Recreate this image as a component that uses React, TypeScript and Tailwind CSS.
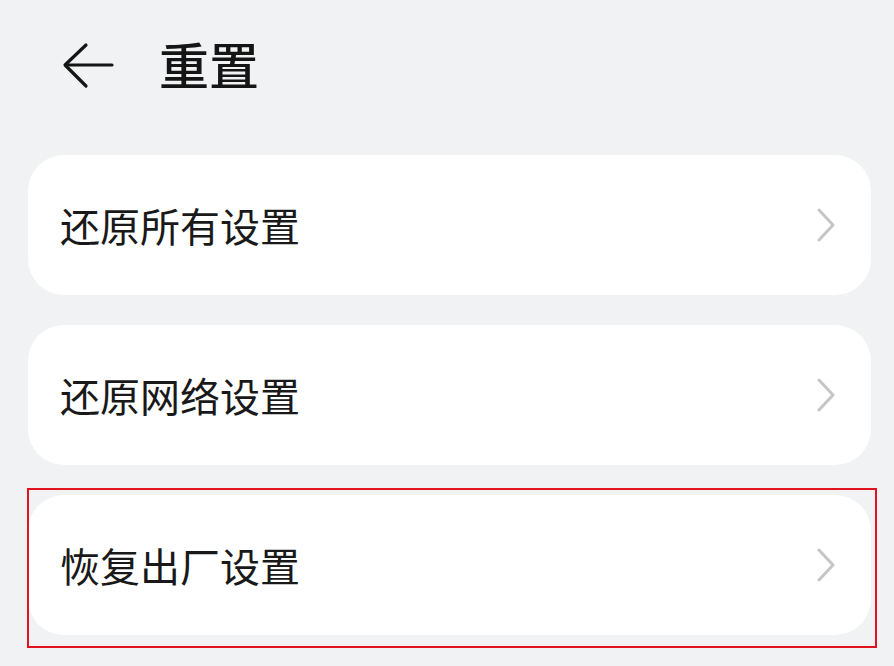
import React from 'react';

const items = ['还原所有设置', '还原网络设置', '恢复出厂设置'];

// Back arrow drawn to match the thin stroke in the header
const BackArrow = () => (
  <svg width="54" height="48" viewBox="0 0 54 48" fill="none" className="text-[#151515]">
    <path d="M51 23H5" stroke="currentColor" strokeWidth="3.2" strokeLinecap="round" />
    <path d="M25 3L4 23L25 44" stroke="currentColor" strokeWidth="3.2" strokeLinecap="round" strokeLinejoin="round" />
  </svg>
);

const Chevron = () => (
  <svg width="19" height="34" viewBox="0 0 19 34" fill="none">
    <path d="M2 2L16 17L2 32" stroke="#c6c6c8" strokeWidth="3" strokeLinecap="round" strokeLinejoin="round" />
  </svg>
);

const SettingRow = ({ label, highlighted }: { label: string; highlighted?: boolean }) => (
  <div className="relative h-[140px] w-[843px] rounded-[36px] bg-white flex items-center justify-between pl-[32px] pr-[35px]">
    <span className="text-[40px] leading-none text-[#191919]">{label}</span>
    <Chevron />
    {highlighted && (
      <div className="absolute -left-[1px] -top-[7px] -right-[6px] -bottom-[13px] border-2 border-[#e3141f] pointer-events-none" />
    )}
  </div>
);

export default function App() {
  return (
    <div
      className="w-[894px] h-[666px] overflow-hidden bg-[#f1f2f4]"
      style={{ fontFamily: '"Noto Sans CJK SC", "Noto Sans", sans-serif' }}
    >
      <div className="h-[132px] flex items-center pl-[61px]">
        <BackArrow />
        <h1 className="ml-[44px] mb-[6px] text-[50px] font-medium leading-none text-[#151515]">重置</h1>
      </div>
      <div className="mt-[23px] ml-[28px] flex flex-col gap-[30px]">
        {items.map((label, i) => (
          <SettingRow key={label} label={label} highlighted={i === 2} />
        ))}
      </div>
    </div>
  );
}
